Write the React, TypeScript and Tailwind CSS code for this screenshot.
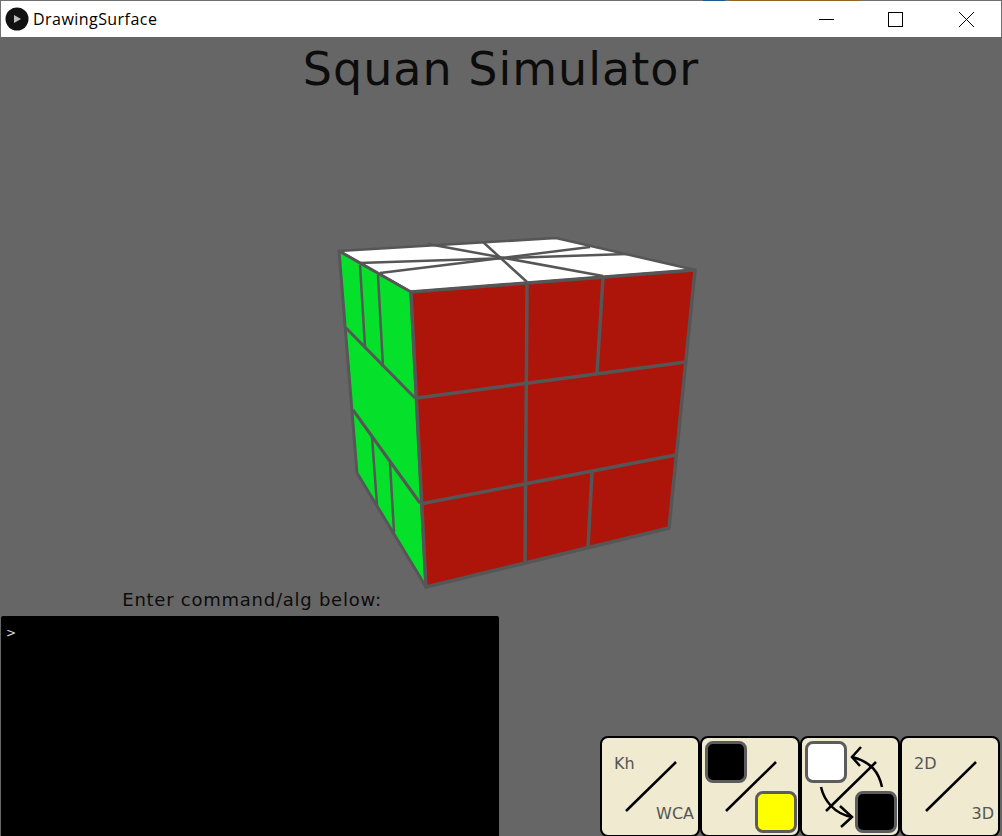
import React from "react";

const lucida = "font-['DejaVu_Sans',sans-serif]";

const GRAY = "#565656";

const Cube = () => (
  <svg width="400" height="358" viewBox="320 232 400 358" className="block">
    <g stroke={GRAY} strokeLinejoin="round">
      <polygon points="339,251 556,238 695,270 411,292" fill="#ffffff" strokeWidth="2.5" />
      <polygon points="339,251 411,292 426,587 357,473" fill="#05e02a" strokeWidth="3" />
      <polygon points="411,292 695,270 669,528 426,587" fill="#ad140a" strokeWidth="3.5" />
    </g>
    <g stroke={GRAY} strokeWidth="2.5" fill="none">
      <line x1="359" y1="263" x2="627" y2="254" />
      <line x1="380" y1="273" x2="590" y2="247" />
      <line x1="428" y1="244" x2="603" y2="276" />
      <line x1="483" y1="242" x2="527" y2="282" />
      <line x1="360" y1="265" x2="365" y2="347" />
      <line x1="378" y1="275" x2="383" y2="367" />
      <line x1="372" y1="437" x2="377" y2="505" />
      <line x1="390" y1="463" x2="394" y2="532" />
    </g>
    <g stroke={GRAY} strokeWidth="3" fill="none">
      <line x1="346" y1="328" x2="415" y2="398" />
      <line x1="353" y1="410" x2="420" y2="503" />
    </g>
    <g stroke={GRAY} strokeWidth="3.5" fill="none">
      <line x1="527" y1="285" x2="525" y2="564" />
      <line x1="603" y1="278" x2="597" y2="373" />
      <line x1="417" y1="398" x2="686" y2="362" />
      <line x1="420" y1="504" x2="676" y2="455" />
      <line x1="592" y1="472" x2="588" y2="548" />
    </g>
  </svg>
);

const Diagonal = () => (
  <svg width="100" height="100" viewBox="0 0 100 100" className="absolute left-0 top-0">
    <line x1="24" y1="73" x2="74" y2="24" stroke="#000" strokeWidth="2.5" />
  </svg>
);

const Swatch = ({ color }: { color: string }) => (
  <div className={`h-[42px] w-[42px] rounded-lg border-[3px] border-[#5c5c5c] ${color}`} />
);

const ToolButton = ({ children }: { children: React.ReactNode }) => (
  <div className="relative h-[101px] w-[100px] shrink-0 rounded-lg border-2 border-black bg-[#f0ead0]">
    {children}
  </div>
);

const LabelButton = ({ top, bottom }: { top: string; bottom: string }) => (
  <ToolButton>
    <Diagonal />
    <div className={`flex h-full flex-col justify-between pb-[11px] pl-[12px] pr-[4px] pt-[16px] text-[16px] leading-[20px] text-[#555] ${lucida}`}>
      <span className="self-start">{top}</span>
      <span className="self-end">{bottom}</span>
    </div>
  </ToolButton>
);

const SwatchButton = ({ first, second, arrows }: { first: string; second: string; arrows?: boolean }) => (
  <ToolButton>
    <Diagonal />
    {arrows && (
      <svg width="100" height="100" viewBox="0 0 100 100" className="absolute left-0 top-0" fill="none" stroke="#000" strokeWidth="2.5">
        <path d="M80 49 C77 35 70 24 50 19" />
        <path d="M59 9 L50 19 L58 28" />
        <path d="M19 49 C22 62 32 76 50 79" />
        <path d="M38 68 L50 79 L39 89" />
      </svg>
    )}
    <div className="relative flex h-full flex-col justify-between pb-[2px] pl-[3px] pr-[1px] pt-[3px]">
      <Swatch color={first} />
      <div className="self-end">
        <Swatch color={second} />
      </div>
    </div>
  </ToolButton>
);

export default function App() {
  return (
    <div className="flex h-[836px] w-[1002px] flex-col overflow-hidden bg-[#666666]">
      {/* desktop showing through above the window */}
      <div className="flex h-[1px] shrink-0 bg-[#707070]">
        <div className="ml-[703px] w-[22px] bg-[#1d5a8c]" />
        <div className="ml-[5px] w-[130px] bg-[#8f6320]" />
      </div>

      {/* window title bar */}
      <div className="flex h-[36px] shrink-0 items-center border-x border-[#707070] bg-white pl-[4px]">
        <svg width="24" height="24" viewBox="0 0 24 24">
          <circle cx="12" cy="12" r="11.5" fill="#111" />
          <polygon points="9,8 9,16 16,12" fill="#bbb" />
        </svg>
        <span className="ml-[4px] font-['Open_Sans',sans-serif] text-[16px] tracking-[0.45px] text-black">DrawingSurface</span>
        <div className="ml-auto flex items-center">
          <svg width="15" height="15" viewBox="0 0 15 15" className="mr-[54px]">
            <line x1="0" y1="7.5" x2="15" y2="7.5" stroke="#000" />
          </svg>
          <svg width="15" height="15" viewBox="0 0 15 15" className="mr-[56px]">
            <rect x="0.5" y="0.5" width="14" height="14" fill="none" stroke="#000" />
          </svg>
          <svg width="15" height="15" viewBox="0 0 15 15" className="mr-[27px]">
            <path d="M0 0 L15 15 M15 0 L0 15" stroke="#000" fill="none" />
          </svg>
        </div>
      </div>

      {/* drawing surface */}
      <div className="flex min-h-0 flex-1 flex-col">
        <h1 className={`mt-[2px] text-center text-[46px] font-normal leading-[60px] tracking-[1px] text-[#0c0c0c] ${lucida}`}>
          Squan Simulator
        </h1>
        <div className="ml-[320px] mt-[133px]">
          <Cube />
        </div>

        <div className="mt-auto flex items-end justify-between">
          <div className="ml-[1px] w-[498px]">
            <p className={`pl-[4px] text-center text-[18px] leading-[20px] tracking-[0.75px] text-[#0c0c0c] ${lucida}`}>
              Enter command/alg below:
            </p>
            <div className={`mt-[6px] h-[220px] rounded-t-[2px] bg-black px-[5px] py-[9px] text-[12px] leading-[16px] text-[#ddd] ${lucida}`}>
              &gt;
            </div>
          </div>
          <div className="-mb-[1px] mr-[2px] flex">
            <LabelButton top="Kh" bottom="WCA" />
            <SwatchButton first="bg-black" second="bg-[#ffff00]" />
            <SwatchButton first="bg-white" second="bg-black" arrows />
            <LabelButton top="2D" bottom="3D" />
          </div>
        </div>
      </div>
    </div>
  );
}
